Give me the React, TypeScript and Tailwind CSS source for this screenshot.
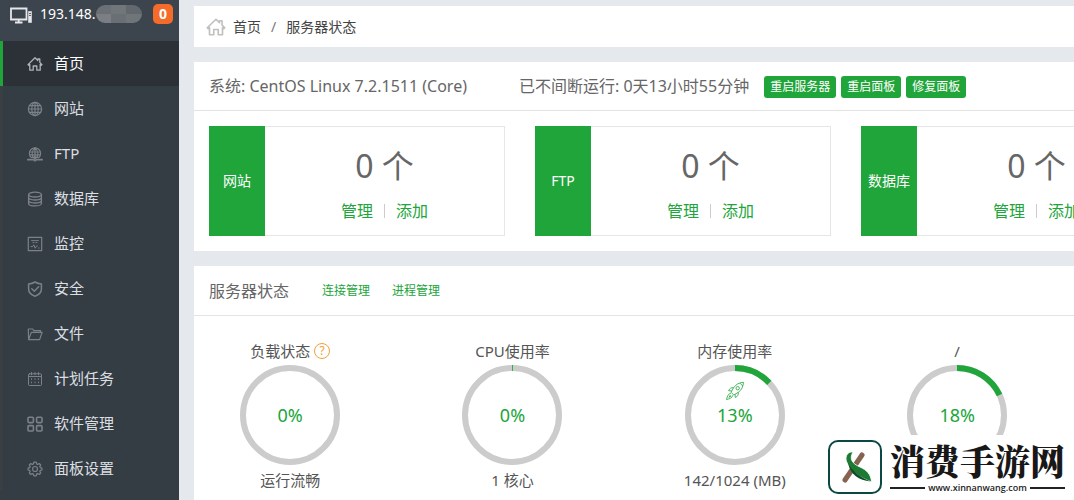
import React from 'react';

type IconProps = { className?: string };

const base = {
  viewBox: '0 0 16 16',
  fill: 'none',
  stroke: 'currentColor',
  strokeLinecap: 'round' as const,
  strokeLinejoin: 'round' as const,
};

const HomeIcon: React.FC<IconProps> = ({ className }) => (
  <svg {...base} strokeWidth="1.3" className={className}>
    <path d="M1 8.6 8 1.8l2.8 2.7V3h2v3.4L15 8.6l-.8.8-1-.9v5.7H9.8V10H6.2v4.2H2.8V8.5l-1 .9z" />
  </svg>
);

const GlobeIcon: React.FC<IconProps> = ({ className }) => (
  <svg {...base} strokeWidth="1.2" className={className}>
    <circle cx="8" cy="8" r="6.6" />
    <ellipse cx="8" cy="8" rx="3.2" ry="6.6" />
    <path d="M8 1.4v13.2M1.4 8h13.2M2.4 4.6h11.2M2.4 11.4h11.2" />
  </svg>
);

const FtpIcon: React.FC<IconProps> = ({ className }) => (
  <svg {...base} strokeWidth="1.2" className={className}>
    <path d="M4 11.4a5.6 5.6 0 1 1 8 0z" />
    <path d="M8 1.8v9.6M2.6 6h10.8M3 8.800h10M6 11.200c-1.500-3-.9-7 2-9.400 2.900 2.400 3.500 6.400 2 9.400" />
    <path d="M8 11v2M.8 13.700h5M10.200 13.700h5" strokeWidth="1.800" />
    <circle cx="8" cy="13.600" r="1.300" />
  </svg>
);

const DatabaseIcon: React.FC<IconProps> = ({ className }) => (
  <svg {...base} strokeWidth="1.3" className={className}>
    <ellipse cx="8" cy="3.6" rx="6.4" ry="2.4" />
    <path d="M1.6 3.6v8.8c0 1.4 2.8 2.5 6.4 2.5s6.4-1.1 6.4-2.5V3.6M1.6 6.6C1.6 8 4.4 9 8 9s6.4-1 6.4-2.4M1.6 9.6C1.6 11 4.4 12 8 12s6.4-1 6.4-2.4" />
  </svg>
);

const MonitorIcon: React.FC<IconProps> = ({ className }) => (
  <svg {...base} className={className}>
    <path d="M1.3 1.3h13.4v13.4H1.3z" strokeWidth="1.2" />
    <path d="M4.6 4.6h6.8M6 6.6h1M9 6.6h1M4 10.6h1.6l1.2-1.8 1.4 3.4 1.3-2.2h.8M11.5 12h.6" />
  </svg>
);

const ShieldIcon: React.FC<IconProps> = ({ className }) => (
  <svg {...base} strokeWidth="1.5" className={className}>
    <path d="M8 1c2 1.3 4.2 1.9 6.4 2v5c0 3.4-2.6 5.8-6.4 7.2C4.2 13.8 1.6 11.4 1.6 8V3C3.8 2.9 6 2.3 8 1z" />
    <path d="m4.8 7.8 2.500 2.500 4.300-4.500" />
  </svg>
);

const FolderIcon: React.FC<IconProps> = ({ className }) => (
  <svg {...base} strokeWidth="1.2" className={className}>
    <path d="M1.6 13.6 1.3 3h4.4l1.2 1.6h6.6v1.8M1.6 13.6h11l2.5-7.2H4.3z" />
  </svg>
);

const CalendarIcon: React.FC<IconProps> = ({ className }) => (
  <svg {...base} className={className}>
    <rect x="1.5" y="2.8" width="13" height="11.7" rx="1" />
    <path d="M1.5 5.5h13M4.5 1.5v2.3M8 1.5v2.3M11.5 1.5v2.3M4.5 7.600v.8M4.500 11v.8M8 7.600v.8M8 11v.8M11.500 7.600v.8M11.500 11v.8" />
  </svg>
);

const GridIcon: React.FC<IconProps> = ({ className }) => (
  <svg {...base} strokeWidth="1.6" className={className}>
    <rect x="1" y="1.2" width="5.4" height="5.4" rx="1" />
    <rect x="9.6" y="1.2" width="5.4" height="5.4" rx="1" />
    <rect x="1" y="9.6" width="5.4" height="5.4" rx="1" />
    <rect x="9.6" y="9.6" width="5.4" height="5.4" rx="1" />
  </svg>
);

const GearIcon: React.FC<IconProps> = ({ className }) => (
  <svg {...base} strokeWidth="1.2" className={className}>
    <path d="m6.8 1.2-.4 1.7-1 .5-1.6-.9-1.5 1.5.9 1.6-.5 1-1.6.4v2l1.6.4.5 1-.9 1.6 1.5 1.5 1.6-.9 1 .5.4 1.7h2.4l.4-1.7 1-.5 1.6.9 1.5-1.5-.9-1.6.5-1L14.9 9V7l-1.6-.4-.5-1 .9-1.6-1.5-1.5-1.6.9-1-.5-.4-1.7z" />
    <circle cx="8" cy="8" r="2.5" />
  </svg>
);

const RocketIcon: React.FC<IconProps> = ({ className }) => (
  <svg viewBox="0 0 20 20" fill="none" stroke="currentColor" strokeWidth=".8" strokeLinejoin="round" className={className}>
    <path d="M18.5 1.3c-4.5.4-7.5 2-9.8 5.3L6 11.2l2.8 2.8 4.7-2.8c3.3-2.4 4.6-5.6 5-9.9z" />
    <path d="M8.6 6.7c-2.6-.3-4 .8-5 3l3.2.3M13.3 11.3c.3 2.5-.8 4.2-3 5.2L10 13.3M15 2.2l2.8 2.8" />
    <circle cx="12.7" cy="7.2" r="1.7" />
    <path d="M5.8 12.3c-2.3.1-3.5 2.8-4.3 6.2 3.3-.6 6-1.9 6.3-4.2M5.5 14l-1.6 2.3L6.2 15" />
  </svg>
);

const HostIcon: React.FC<IconProps> = ({ className }) => (
  <svg viewBox="0 0 23 17" fill="none" stroke="currentColor" className={className}>
    <path d="M1 1.5h15.5v11H1z" strokeWidth="1.8" />
    <path d="M8.7 12.5v3M5 15.5h7.5" strokeWidth="1.8" />
    <path d="M18.2 4.2h3.6v11.6h-3.6z" fill="currentColor" stroke="none" />
    <path d="M19 6.5h2M19 8.5h2" stroke="#3c444d" strokeWidth=".8" />
  </svg>
);

type MenuItem = {
  label: string;
  icon: React.FC<IconProps>;
  active?: boolean;
};

const menu: MenuItem[] = [
  { label: '首页', icon: HomeIcon, active: true },
  { label: '网站', icon: GlobeIcon },
  { label: 'FTP', icon: FtpIcon },
  { label: '数据库', icon: DatabaseIcon },
  { label: '监控', icon: MonitorIcon },
  { label: '安全', icon: ShieldIcon },
  { label: '文件', icon: FolderIcon },
  { label: '计划任务', icon: CalendarIcon },
  { label: '软件管理', icon: GridIcon },
  { label: '面板设置', icon: GearIcon },
];

const Sidebar = () => (
  <aside className="w-[179px] shrink-0 bg-[#353d44] text-white">
    <div className="flex h-[41px] items-start bg-[#3c444d] pt-1 pr-[6px] pl-[10px]">
      <HostIcon className="mt-[3px] h-[17px] w-[23px] text-gray-200" />
      <span className="ml-[7px] text-sm leading-5">193.148.</span>
      {/* masked part of the address */}
      <span className="mt-px grid h-[18px] w-[46px] grid-cols-3 overflow-hidden rounded-full">
        <i className="bg-[#6b7076]" />
        <i className="bg-[#71767b]" />
        <i className="bg-[#62686e]" />
        <i className="bg-[#7b7f83]" />
        <i className="bg-[#696f74]" />
        <i className="bg-[#70757a]" />
      </span>
      <span className="ml-auto h-5 w-5 rounded-[5px] bg-[#f56b2a] text-center text-sm leading-5 font-bold">0</span>
    </div>
    <nav>
      {menu.map(({ label, icon: Icon, active }) => (
        <a
          key={label}
          href="#"
          className={
            active
              ? 'flex h-[45px] items-center border-l-[3px] border-[#20a53a] bg-[#2c3138] pl-6 text-[15px] text-white'
              : 'flex h-[45px] items-center border-l-[3px] border-[#3a3f44] pl-6 text-[15px] text-[#dcdfe2]'
          }
        >
          <Icon className={active ? 'h-4 w-4 text-[#b0b3b6]' : 'h-4 w-4 text-[#7b8187]'} />
          <span className="ml-[11px]">{label}</span>
        </a>
      ))}
    </nav>
  </aside>
);

const CountCard = ({ name }: { name: string }) => (
  <div className="flex h-[110px] border border-[#e6e6e6]">
    <div className="-my-px -ml-px flex w-14 items-center justify-center bg-[#20a53a] text-sm text-white">{name}</div>
    <div className="flex-1 text-center">
      <p className="mt-4 text-[32px] leading-[46px] text-[#666]">0 个</p>
      <p className="mt-3 flex items-center justify-center gap-[11px] text-base leading-5 text-[#20a53a]">
        <a href="#">管理</a>
        <span className="h-[14px] w-px bg-[#ccc]" />
        <a href="#">添加</a>
      </p>
    </div>
  </div>
);

type GaugeProps = {
  title: string;
  percent: number;
  arc: number;
  note?: string;
  help?: boolean;
  rocket?: boolean;
};

const Gauge: React.FC<GaugeProps> = ({ title, percent, arc, note, help, rocket }) => (
  <div className="flex flex-col items-center text-[15px] text-[#555]">
    <h3 className="flex h-[22px] items-center">
      {title}
      {help && (
        <button
          type="button"
          className="ml-1 h-4 w-4 rounded-full border border-[#f0a03c] text-center text-xs leading-[14px] text-[#f0a03c]"
        >
          ?
        </button>
      )}
    </h3>
    <div className="relative mt-[3px] flex h-[100px] w-[100px] items-center justify-center">
      <svg viewBox="0 0 100 100" fill="none" strokeWidth="6" className="absolute inset-0 -rotate-90">
        <circle cx="50" cy="50" r="47" stroke="#ccc" />
        {arc > 0 && <circle cx="50" cy="50" r="47" stroke="#20a53a" pathLength="100" strokeDasharray={`${arc} 100`} />}
      </svg>
      {rocket && <RocketIcon className="absolute top-4 left-10 h-5 w-5 text-[#20a53a]" />}
      <span className="relative text-lg text-[#20a53a]">{percent}%</span>
    </div>
    {note && <p className="mt-1 leading-[22px]">{note}</p>}
  </div>
);

const SiteMark = () => (
  <div className="absolute right-0 bottom-0 flex h-[65px] items-start bg-white pt-[5px] pr-[9px] pl-2">
    <svg viewBox="0 0 54 54" className="h-[54px] w-[54px]">
      <rect x="1" y="1" width="52" height="52" rx="9" fill="#fff" stroke="#0c4843" strokeWidth="2" />
      <path d="m17 40 17-25" stroke="#86634e" strokeWidth="5" strokeLinecap="round" />
      <path
        d="M25 12c-6-1-9 6-5.500 11.500C24 32 31 37 43.500 42c-.5-8-5-12-11.500-15-8-3.500-11-8-7-15z"
        fill="#1d7a32"
        stroke="#fff"
        strokeWidth=".8"
      />
      <path d="M20 23c5 9 12 14 22.500 18.500C31 40 22.500 35 20 23z" fill="#0b4d24" />
    </svg>
    <div className="ml-2">
      <p className="font-['Noto_Serif_CJK_SC','Noto_Sans_CJK_SC',serif] text-[35px] leading-[40px] font-black text-[#181818]">
        消费手游网
      </p>
      <p className="mt-0.5 flex items-center gap-[3px] font-['Open_Sans',sans-serif] text-[9px] leading-[12px] font-semibold text-[#222]">
        <span className="h-0.5 flex-1 bg-[#222]" />
        www.xinnanwang.com
        <span className="h-0.5 flex-1 bg-[#222]" />
      </p>
    </div>
  </div>
);

const App = () => (
  <div className="relative flex h-screen overflow-hidden bg-[#e5e8ed] font-['Noto_Sans','Noto_Sans_CJK_SC',sans-serif]">
    <Sidebar />
    <main className="ml-[15px] flex min-w-[1304px] flex-1 flex-col gap-[15px] pt-1.5">
      <div className="flex h-[41px] shrink-0 items-center bg-white pl-3 text-sm text-[#444]">
        <HomeIcon className="h-5 w-5 text-[#c0c0c0]" />
        <a href="#" className="ml-[7px]">首页</a>
        <span className="mx-[10px] text-[#777]">/</span>
        <span>服务器状态</span>
      </div>

      <section className="shrink-0 bg-white">
        <div className="flex h-[49px] items-center border-b border-[#e4e4e4] px-[15px] text-base text-[#666]">
          <span>系统: CentOS Linux 7.2.1511 (Core)</span>
          <span className="ml-[52px]">已不间断运行: 0天13小时55分钟</span>
          <div className="ml-[15px] flex gap-[5px] pt-0.5 text-xs leading-[22px] text-white">
            <button type="button" className="rounded-[3px] bg-[#20a53a] px-1.5">重启服务器</button>
            <button type="button" className="rounded-[3px] bg-[#20a53a] px-1.5">重启面板</button>
            <button type="button" className="rounded-[3px] bg-[#20a53a] px-1.5">修复面板</button>
          </div>
        </div>
        <div className="grid grid-cols-4 gap-[30px] p-[15px]">
          <CountCard name="网站" />
          <CountCard name="FTP" />
          <CountCard name="数据库" />
        </div>
      </section>

      <section className="flex-1 bg-white">
        <div className="flex h-[50px] items-center border-b border-[#e4e4e4] px-[15px] text-[#20a53a]">
          <h2 className="text-base text-[#666]">服务器状态</h2>
          <a href="#" className="ml-[33px] text-xs">连接管理</a>
          <a href="#" className="ml-[22px] text-xs">进程管理</a>
        </div>
        <div className="-mx-[15px] grid grid-cols-6 pt-6">
          <Gauge title="负载状态" percent={0} arc={0} note="运行流畅" help />
          <Gauge title="CPU使用率" percent={0} arc={0.3} note="1 核心" />
          <Gauge title="内存使用率" percent={13} arc={13} note="142/1024 (MB)" rocket />
          <Gauge title="/" percent={18} arc={18} />
        </div>
      </section>
    </main>
    <SiteMark />
  </div>
);

export default App;
